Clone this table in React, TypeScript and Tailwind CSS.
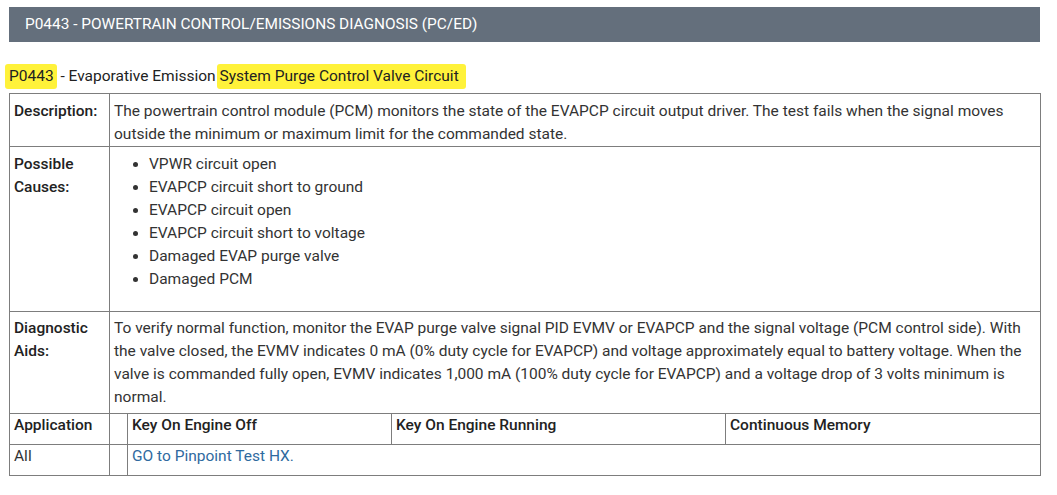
import React from "react";

const causes = [
  "VPWR circuit open",
  "EVAPCP circuit short to ground",
  "EVAPCP circuit open",
  "EVAPCP circuit short to voltage",
  "Damaged EVAP purge valve",
  "Damaged PCM",
];

export default function App() {
  const cell = "border border-[#7d7d7d] align-top";
  return (
    <div
      className="w-[1057px] h-[495px] bg-white text-[#333] overflow-hidden"
      style={{ fontFamily: "Roboto, 'Liberation Sans', sans-serif" }}
    >
      <div className="pt-[7px] pl-[9px] w-[1040px]">
        <div className="h-[35px] bg-[#646f7c] text-white text-[15.4px] flex items-center pl-[16px]">
          P0443 - POWERTRAIN CONTROL/EMISSIONS DIAGNOSIS (PC/ED)
        </div>
        <div className="mt-[21px] h-[27px] text-[15.5px] text-[#222] flex items-center">
          <span className="bg-[#fff23a] rounded-[3px] -ml-[4px] pl-[4px] pr-[3px] py-[1px]">P0443</span>
          <span>&nbsp;- Evaporative Emission&nbsp;</span>
          <span className="bg-[#fff23a] rounded-[3px] -ml-[2px] pl-[2px] pr-[7px] py-[1px]">
            System Purge Control Valve Circuit
          </span>
        </div>
        <table className="mt-[3px] table-fixed border-collapse w-[1031px] text-[15.5px] leading-[23px]">
          <colgroup>
            <col className="w-[100px]" />
            <col className="w-[18px]" />
            <col className="w-[264px]" />
            <col className="w-[334px]" />
            <col className="w-[315px]" />
          </colgroup>
          <tbody>
            <tr className="h-[53px]">
              <td className={`${cell} font-medium text-[#222] px-[4px] pt-[6px]`}>Description:</td>
              <td className={`${cell} px-[4px] pt-[6px]`} colSpan={4}>
                The powertrain control module (PCM) monitors the state of the EVAPCP circuit output driver. The
                test fails when the signal moves outside the minimum or maximum limit for the commanded state.
              </td>
            </tr>
            <tr className="h-[165px]">
              <td className={`${cell} font-medium text-[#222] px-[4px] pt-[6px]`}>
                Possible
                <br />
                Causes:
              </td>
              <td className={`${cell} px-[4px] pt-[6px]`} colSpan={4}>
                <ul className="pl-[35px]">
                  {causes.map((c) => (
                    <li key={c} className="list-disc">
                      {c}
                    </li>
                  ))}
                </ul>
              </td>
            </tr>
            <tr className="h-[101px]">
              <td className={`${cell} font-medium text-[#222] px-[4px] pt-[5px] pb-[4px]`}>
                Diagnostic
                <br />
                Aids:
              </td>
              <td className={`${cell} px-[4px] pt-[5px] pb-[4px]`} colSpan={4}>
                To verify normal function, monitor the EVAP purge valve signal PID EVMV or EVAPCP and the signal
                voltage (PCM control side). With the valve closed, the EVMV indicates 0 mA (0% duty cycle for
                EVAPCP) and voltage approximately equal to battery voltage. When the valve is commanded fully open,
                EVMV indicates 1,000 mA (100% duty cycle for EVAPCP) and a voltage drop of 3 volts minimum is
                normal.
              </td>
            </tr>
            <tr className="h-[31px] font-medium text-[#222]">
              <td className={`${cell} px-[4px] align-middle`}>Application</td>
              <td className={`${cell}`}></td>
              <td className={`${cell} px-[4px] align-middle`}>Key On Engine Off</td>
              <td className={`${cell} px-[4px] align-middle`}>Key On Engine Running</td>
              <td className={`${cell} px-[4px] align-middle`}>Continuous Memory</td>
            </tr>
            <tr className="h-[31px]">
              <td className={`${cell} px-[4px] align-middle`}>All</td>
              <td className={`${cell}`}></td>
              <td className={`${cell} px-[4px] align-middle text-[#2f6aa0]`} colSpan={3}>
                GO to Pinpoint Test HX.
              </td>
            </tr>
          </tbody>
        </table>
      </div>
    </div>
  );
}
